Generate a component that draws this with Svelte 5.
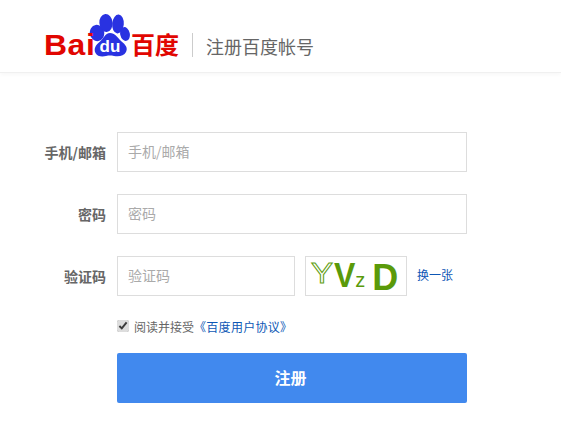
<script>
  let agree = $state(true);
</script>

<header class="header">
  <div class="logo">
    <span class="bai">Bai</span>
    <svg class="paw" viewBox="0 0 42 43" width="42" height="43" aria-hidden="true">
      <ellipse cx="8" cy="19" rx="7.2" ry="8.2" transform="rotate(-10 8 19)" fill="#2932e1"/>
      <ellipse cx="17" cy="9" rx="6.6" ry="9" transform="rotate(-5 17 9)" fill="#2932e1"/>
      <ellipse cx="29" cy="10" rx="5.8" ry="9.5" transform="rotate(5 29 10)" fill="#2932e1"/>
      <ellipse cx="36" cy="20" rx="4.8" ry="7" transform="rotate(-12 36 20)" fill="#2932e1"/>
      <path d="M21 19c5 0 7 4 11 8 5 4 7 7 5 11-2 4-7 5-12 4-3-.6-5-.6-8 0-4 1-9 .5-10.500-3-2-4 0-8 4-11 4-3 5.500-9 10.500-9z" fill="#2932e1"/>
      <text x="21" y="38" class="du">du</text>
    </svg>
    <span class="baidu">百度</span>
  </div>
  <h1 class="title">注册百度帐号</h1>
</header>

<form class="form" onsubmit={(e) => e.preventDefault()}>
  <div class="row">
    <label class="label" for="user">手机/邮箱</label>
    <input id="user" class="input" placeholder="手机/邮箱" />
  </div>
  <div class="row">
    <label class="label" for="pwd">密码</label>
    <input id="pwd" class="input" placeholder="密码" />
  </div>
  <div class="row">
    <label class="label" for="code">验证码</label>
    <input id="code" class="input short" placeholder="验证码" />
    <div class="captcha" role="img" aria-label="YVz D">
      <span class="cap-y">Y</span>
      <span class="cap-v">V</span>
      <span class="cap-z">z</span>
      <span class="cap-d">D</span>
    </div>
    <a class="swap" href="#swap">换一张</a>
  </div>
  <div class="agree">
    <input class="check" type="checkbox" bind:checked={agree} />
    <span>阅读并接受</span>
    <a class="terms" href="#terms">《百度用户协议》</a>
  </div>
  <button class="submit" type="submit"><span class="submit-text">注册</span></button>
</form>

<style>
  :global(body) {
    margin: 0;
    background: #fff;
    font-family: "Noto Sans CJK SC", "Liberation Sans", sans-serif;
  }
  .header {
    height: 58px;
    display: flex;
    align-items: flex-start;
    padding: 14px 0 0 43px;
    border-bottom: 1px solid #f0f0f0;
    box-shadow: 0 2px 4px rgba(0, 0, 0, 0.03);
  }
  .logo {
    display: flex;
    align-items: flex-end;
    height: 43px;
    width: 149px;
  }
  .bai {
    font: 900 29px/24px "Liberation Sans", sans-serif;
    color: #e10601;
    letter-spacing: 0.5px;
    width: 46px;
    flex: none;
    margin-left: 1px;
    margin-right: -1px;
    transform: scaleX(1.1);
    transform-origin: left;
  }
  .paw {
    display: block;
    flex: none;
  }
  .du {
    font: 700 17px "Liberation Sans", sans-serif;
    fill: #fff;
    text-anchor: middle;
  }
  .baidu {
    font: 700 24px/24px "Noto Sans CJK SC", sans-serif;
    color: #e10601;
    white-space: nowrap;
    margin-bottom: 1px;
    flex: none;
  }
  .title {
    margin: 19px 0 0 0;
    padding-left: 13px;
    border-left: 1px solid #ccc;
    height: 24px;
    font: 400 18px/26px "Noto Sans CJK SC", sans-serif;
    color: #666;
    white-space: nowrap;
    width: 110px;
  }
  .form {
    padding: 59px 0 0 0;
    width: 467px;
    display: flex;
    flex-direction: column;
    gap: 22px;
  }
  .row {
    display: flex;
    align-items: center;
    height: 40px;
  }
  .label {
    width: 106px;
    flex: none;
    margin-right: 11px;
    padding-bottom: 1px;
    text-align: right;
    font-size: 14px;
    font-weight: 700;
    color: #666;
    white-space: nowrap;
  }
  .input {
    box-sizing: border-box;
    width: 350px;
    height: 40px;
    padding: 0 10px 2px;
    border: 1px solid #ddd;
    border-radius: 0;
    outline: none;
    font: 14px "Noto Sans CJK SC", sans-serif;
    color: #333;
  }
  .input::placeholder {
    color: #aaa;
    opacity: 1;
  }
  .input.short {
    width: 178px;
  }
  .captcha {
    box-sizing: border-box;
    width: 102px;
    height: 40px;
    margin-left: 10px;
    padding-top: 3px;
    border: 1px solid #ddd;
    display: flex;
    align-items: baseline;
    font-family: "Liberation Sans", sans-serif;
    line-height: 1;
    color: #5a9a0a;
  }
  .cap-y {
    font-size: 30px;
    margin-left: 5px;
    margin-right: 3px;
    color: #fff;
    -webkit-text-stroke: 1px #5f9e12;
    transform: translateY(-7px) scaleX(1.1);
    transform-origin: left;
  }
  .cap-v {
    font-size: 32px;
    font-weight: 700;
    transform: translateY(-4px) scaleY(1.1);
  }
  .cap-z {
    font-size: 20px;
    transform: translateY(-3px);
  }
  .cap-d {
    font-size: 36px;
    font-weight: 700;
    margin-left: 7px;
  }
  .swap {
    margin-left: 10px;
    padding-bottom: 4px;
    font-size: 12px;
    color: #0d57b5;
    text-decoration: none;
    white-space: nowrap;
  }
  .agree {
    display: flex;
    align-items: center;
    height: 16px;
    font-size: 12px;
    margin: 0 0 0 117px;
    color: #666;
    white-space: nowrap;
  }
  .check {
    width: 12px;
    height: 12px;
    margin: 0 5px 0 0;
    accent-color: #ddd;
  }
  .terms {
    color: #0d57b5;
    text-decoration: none;
    letter-spacing: 0.3px;
  }
  .submit {
    margin: -3px 0 0 117px;
    width: 350px;
    height: 50px;
    padding: 0 0 3px;
    border: 0;
    border-radius: 2px;
    background: #4189ee;
    color: #fff;
    font: 700 16px "Noto Sans CJK SC", sans-serif;
  }
  .submit-text {
    margin-left: -3px;
  }
</style>
